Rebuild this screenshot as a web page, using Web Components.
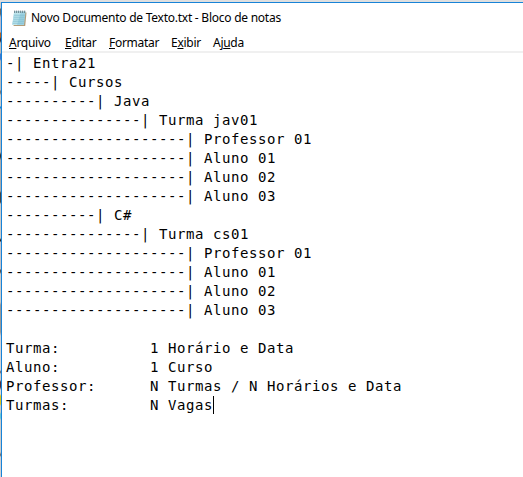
<!DOCTYPE html>
<html lang="pt-BR"><head><meta charset="utf-8"><title>Bloco de notas</title>
<style>html,body{margin:0;height:100%;overflow:hidden;background:#fff}</style></head>
<body>
<notepad-window>
<title-bar slot="title">Novo Documento de Texto.txt - Bloco de notas</title-bar>
<menu-bar slot="menu"></menu-bar>
<text-editor slot="body"></text-editor>
</notepad-window>
<script>
const define=(name,html,setup)=>customElements.define(name,class extends HTMLElement{
  constructor(){super();this.attachShadow({mode:'open'}).innerHTML=html;if(setup)setup(this.shadowRoot);}
});
define('title-bar',`<style>
:host{display:flex;align-items:center;height:30px;padding-left:8px;box-sizing:border-box;font:12px/30px "Noto Sans","Open Sans",sans-serif;color:#000;white-space:nowrap}
svg{width:17px;height:17px;margin-right:4px;flex:none}
span{letter-spacing:-.25px}
</style><svg viewBox="0 0 17 17">
<path d="M5 2.5L16.5 2.5L15.2 16L3.5 16Z" fill="#b19b78"/>
<path d="M4.2 1.6L15.6 1.6L14 15L2.2 15Z" fill="#a0d3e2"/>
<path d="M4.2 1.6L11 1.6L7 15L2.2 15Z" fill="#bfe5ec"/>
<path d="M4 5.2H14.8M3.7 7.2H14.5M3.3 9.2H14.2M3 11.2H14M2.7 13.2H13.7" stroke="#77b8cc" stroke-width=".7"/>
<path d="M4.7 .6V3M6.7 .6V3M8.7 .6V3M10.7 .6V3M12.7 .6V3M14.7 .6V3" stroke="#58717b" stroke-width=".9"/>
</svg><span><slot></slot></span>`);
define('menu-bar',`<style>
:host{display:flex;height:18px;padding:1px 0 0 7px;box-sizing:border-box;font:12px/18px "Noto Sans","Open Sans",sans-serif;color:#000}
span{white-space:nowrap;flex:none;letter-spacing:-.28px}
u{text-decoration-thickness:1px;text-underline-offset:1px;text-decoration-skip-ink:none}
</style>
<span style="width:56px"><u>A</u>rquivo</span><span style="width:44px"><u>E</u>ditar</span><span style="width:62px"><u>F</u>ormatar</span><span style="width:42px">E<u>x</u>ibir</span><span>Aj<u>u</u>da</span>`);
const lines=[
 [1,'Entra21'],[5,'Cursos'],[10,'Java'],[15,'Turma jav01'],
 [20,'Professor 01'],[20,'Aluno 01'],[20,'Aluno 02'],[20,'Aluno 03'],
 [10,'C#'],[15,'Turma cs01'],
 [20,'Professor 01'],[20,'Aluno 01'],[20,'Aluno 02'],[20,'Aluno 03']
].map(([n,t])=>'-'.repeat(n)+'| '+t).concat('',
 [['Turma:','1 Horário e Data'],['Aluno:','1 Curso'],['Professor:','N Turmas / N Horários e Data'],['Turmas:','N Vagas']]
 .map(([k,v])=>k.padEnd(16)+v));
define('text-editor',`<style>
:host{display:block;padding:1px 0 0 4px;font:14px/19px "DejaVu Sans Mono",monospace;letter-spacing:.572px;color:#000}
div{height:19px;white-space:pre}
i{display:inline-block;width:1px;height:18px;background:#000;vertical-align:-4px}
</style>`,root=>{
 lines.forEach(t=>{const d=document.createElement('div');d.textContent=t;root.append(d);});
 root.lastElementChild.append(document.createElement('i'));
});
define('notepad-window',`<style>
:host{display:grid;grid-template-columns:1px 1fr;grid-template-rows:2px 475px;width:523px;height:477px;overflow:hidden}
.top{grid-column:1/3;background:#dfdfdf}
.side{background:linear-gradient(#ccc 6px,#666 7px 12px,#bbc 15px 30px,#b56323 31px 35px,#334 37px 39px,#bbb 41px 51px,#3c78d0 52px 57px,#bbb 59px 88px,#777 89px 91px,#ccc 93px 104px,#1684d8 105px 106px,#bbb 107px 150px,#333 153px 155px,#aaa 158px 189px,#444 191px 200px,#ccc 202px 236px,#222 238px 239px,#c4c4cc 240px 267px,#555 268px 270px,#ccc 272px 300px,#999 303px 330px,#d3d3d8 334px 368px,#556 370px,#ccc 372px 378px,#523040 380px 385px,#ddd 388px 392px,#dfc51b 394px 402px,#ccc 404px 410px,#69c8d8 412px 416px,#ccc 418px 450px,#666 453px,#d0d0d5 455px)}
.win{border-left:1px solid #1883d7;border-top:1px solid #1883d7;background:#fff;min-width:0}
.menu{border-bottom:2px solid #f0f0f0}
</style><div class="top"></div><div class="side"></div>
<div class="win"><slot name="title"></slot><div class="menu"><slot name="menu"></slot></div><slot name="body"></slot></div>`);
</script></body></html>
